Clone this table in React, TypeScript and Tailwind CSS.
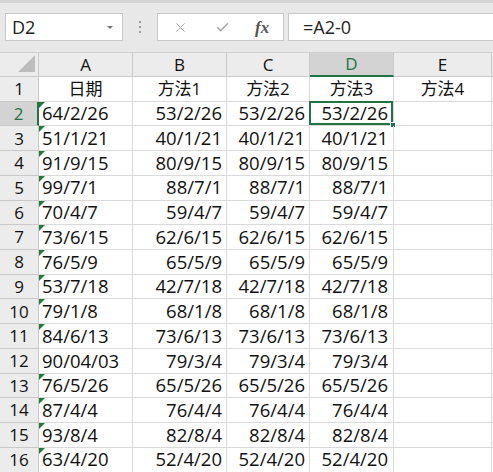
import { X, Check } from 'lucide-react'

const rows: [string, string, boolean][] = [
  ['64/2/26', '53/2/26', true],
  ['51/1/21', '40/1/21', true],
  ['91/9/15', '80/9/15', true],
  ['99/7/1', '88/7/1', true],
  ['70/4/7', '59/4/7', true],
  ['73/6/15', '62/6/15', true],
  ['76/5/9', '65/5/9', true],
  ['53/7/18', '42/7/18', true],
  ['79/1/8', '68/1/8', true],
  ['84/6/13', '73/6/13', true],
  ['90/04/03', '79/3/4', false],
  ['76/5/26', '65/5/26', true],
  ['87/4/4', '76/4/4', true],
  ['93/8/4', '82/8/4', true],
  ['63/4/20', '52/4/20', true],
]

const cols = ['A', 'B', 'C', 'D', 'E']
const font = { fontFamily: '"Open Sans", "Noto Sans CJK TC", sans-serif' }

function Toolbar() {
  return (
    <div className="h-[52px] shrink-0 border-t-[3px] border-[#d5d5d5] bg-[#e8e8e8] pt-[10px] flex items-start">
      <div className="ml-[5px] w-[118px] h-[28px] bg-white border border-[#c8c8c8] flex items-center justify-between pl-[6px] pr-[9px]">
        <span className="text-[18px] text-[#222] leading-none">D2</span>
        <span className="w-0 h-0 border-l-[3.5px] border-r-[3.5px] border-t-[3.5px] border-l-transparent border-r-transparent border-t-[#707070]" />
      </div>
      <div className="w-[34px] h-[28px] flex flex-col items-center justify-center gap-[3px]">
        <span className="w-[2px] h-[2px] bg-[#9a9a9a]" />
        <span className="w-[2px] h-[2px] bg-[#9a9a9a]" />
        <span className="w-[2px] h-[2px] bg-[#9a9a9a]" />
      </div>
      <div className="w-[127px] h-[28px] bg-white border border-[#c8c8c8] flex items-center">
        <X className="ml-[15px] w-[15px] h-[15px] text-[#a8a8a8]" strokeWidth={1.6} />
        <Check className="ml-[27px] w-[15px] h-[15px] text-[#a8a8a8]" strokeWidth={2.4} />
        <span className="ml-[25px] text-[17px] italic font-bold text-[#555] leading-none" style={{ fontFamily: '"Liberation Serif", serif' }}>
          fx
        </span>
      </div>
      <div className="ml-[4px] flex-1 h-[28px] bg-white border border-[#c8c8c8] border-r-0 flex items-center pl-[14px]">
        <span className="text-[18px] text-[#222] leading-none">=A2-0</span>
      </div>
    </div>
  )
}

function Triangle() {
  return <span className="absolute left-0 top-0 w-0 h-0 border-t-[6px] border-r-[6px] border-t-[#1e7b3a] border-r-transparent" />
}

export default function App() {
  return (
    <div className="w-[493px] h-[472px] overflow-hidden bg-white flex flex-col text-[#111]" style={font}>
      <Toolbar />
      <div className="grid grid-cols-[39px_94px_94px_83px_84px_98px_10px] grid-rows-[25px_repeat(16,24.73px)] text-[18.5px] font-medium">
        {/* header row */}
        <div className="relative bg-[#ececec] border-r border-b border-[#c9c9c9] border-t border-t-[#d0d0d0]">
          <span className="absolute right-[3px] bottom-[4px] w-[17px] h-[17px] bg-[#bdbdbd] [clip-path:polygon(100%_0,100%_100%,0_100%)]" />
        </div>
        {cols.map((c) =>
          c === 'D' ? (
            <div key={c} className="bg-[#d3d3d3] border-r border-[#c9c9c9] border-t border-t-[#d0d0d0] border-b-2 border-b-[#217346] text-[#217346] text-[17px] font-normal flex items-center justify-center">
              {c}
            </div>
          ) : (
            <div key={c} className="bg-[#ececec] border-r border-b border-[#c9c9c9] border-t border-t-[#d0d0d0] text-[17px] font-normal flex items-center justify-center">
              {c}
            </div>
          )
        )}
        <div className="bg-[#ececec] border-b border-[#c9c9c9] border-t border-t-[#d0d0d0]" />

        {/* row 1 */}
        <div className="bg-[#ececec] border-r border-b border-[#c9c9c9] text-[17px] font-normal flex items-center justify-center">1</div>
        {['日期', '方法1', '方法2', '方法3', '方法4'].map((t) => (
          <div key={t} className="border-r border-b border-[#dadada] text-[17px] font-normal flex items-center justify-center">
            {t}
          </div>
        ))}
        <div className="border-b border-[#dadada]" />

        {rows.map(([a, b, tri], i) => {
          const n = i + 2
          const sel = n === 2
          return [
            <div
              key={`h${n}`}
              className={
                sel
                  ? 'bg-[#d3d3d3] border-r-2 border-r-[#217346] border-b border-b-[#c9c9c9] text-[#217346] text-[17px] font-normal flex items-center justify-center'
                  : 'bg-[#ececec] border-r border-b border-[#c9c9c9] text-[17px] font-normal flex items-center justify-center'
              }
            >
              {n}
            </div>,
            <div key={`a${n}`} className="relative border-r border-b border-[#dadada] flex items-center pl-[3px] leading-none">
              {tri && <Triangle />}
              {a}
            </div>,
            <div key={`b${n}`} className="border-r border-b border-[#dadada] flex items-center justify-end pr-[4px] leading-none">{b}</div>,
            <div key={`c${n}`} className="border-r border-b border-[#dadada] flex items-center justify-end pr-[4px] leading-none">{b}</div>,
            <div key={`d${n}`} className="relative border-r border-b border-[#dadada] flex items-center justify-end pr-[5px] leading-none">
              {sel && (
                <>
                  <span className="absolute -left-[1px] -top-[1px] right-0 bottom-0 border-2 border-[#217346]" />
                  <span className="absolute -right-[3px] -bottom-[3px] w-[6px] h-[6px] bg-[#217346] border border-white" />
                </>
              )}
              {b}
            </div>,
            <div key={`e${n}`} className="border-r border-b border-[#dadada]" />,
            <div key={`f${n}`} className="border-b border-[#dadada]" />,
          ]
        })}
      </div>
    </div>
  )
}
